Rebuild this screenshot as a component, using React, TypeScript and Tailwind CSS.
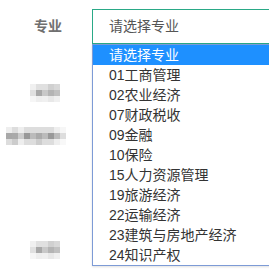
import React from "react";

const options = [
  "请选择专业",
  "01工商管理",
  "02农业经济",
  "07财政税收",
  "09金融",
  "10保险",
  "15人力资源管理",
  "19旅游经济",
  "22运输经济",
  "23建筑与房地产经济",
  "24知识产权",
];

// mosaic-blurred labels (censored in the original)
const shortMosaic = [
  ["#f0f0f0", "#e0e0e0", "#e0e0e0", "#d0d0d0", "#d8d8d8"],
  ["#e0e0e0", "#a8a8a8", "#c8c8c8", "#b4b4b4", "#c0c0c0"],
  ["#f6f6f6", "#eeeeee", "#f0f0f0", "#e8e8e8", "#f0f0f0"],
];

const longMosaic = [
  ["#eeeeee", "#dddddd", "#eeeeee", "#dddddd", "#dddddd", "#dddddd", "#dddddd", "#dddddd", "#eeeeee", "#f6f6f6"],
  ["#a8a8a8", "#aaaaaa", "#cccccc", "#999999", "#bbbbbb", "#aaaaaa", "#bbbbbb", "#999999", "#bbbbbb", "#dddddd"],
  ["#dddddd", "#cccccc", "#eeeeee", "#dddddd", "#dddddd", "#cccccc", "#dddddd", "#dddddd", "#eeeeee", "#f8f8f8"],
];

function Mosaic({ cells }: { cells: string[][] }) {
  return (
    <div className="flex flex-col blur-[0.6px]">
      {cells.map((row, i) => (
        <div key={i} className="flex">
          {row.map((c, j) => (
            <div key={j} className="w-[6px] h-[6px]" style={{ backgroundColor: c }} />
          ))}
        </div>
      ))}
    </div>
  );
}

export default function App() {
  return (
    <div className="relative w-[269px] h-[270px] overflow-hidden bg-white font-['Liberation_Sans','Noto_Sans_CJK_SC',sans-serif]">
      <div className="flex flex-col pt-[9px]">
        <div className="flex items-center h-[35px]">
          <div className="w-[62px] shrink-0 text-right text-[14px] text-[#707070] font-bold">专业</div>
          <div className="relative ml-[30px] w-[200px] shrink-0">
            <div className="h-[35px] border border-[#2aa987] flex items-center pl-[16px] text-[14px] text-[#555]">
              请选择专业
            </div>
            <ul className="absolute left-0 top-[35px] z-10 w-[200px] border border-[#7d9bd6] bg-white shadow-[0_1px_2px_rgba(0,0,0,0.12)]">
              {options.map((o, i) => (
                <li
                  key={o}
                  className={
                    i === 0
                      ? "h-[20px] leading-[20px] pl-[16px] text-[14px] bg-[#1e90ff] text-white"
                      : "h-[20px] leading-[20px] pl-[16px] text-[14px] text-[#333]"
                  }
                >
                  {o}
                </li>
              ))}
            </ul>
          </div>
        </div>
        <div className="flex flex-col">
          <div className="pl-[30px] mt-[40px]">
            <Mosaic cells={shortMosaic} />
          </div>
          <div className="pl-[6px] mt-[25px]">
            <Mosaic cells={longMosaic} />
          </div>
          <div className="pl-[30px] mt-[96px]">
            <Mosaic cells={shortMosaic} />
          </div>
        </div>
      </div>
    </div>
  );
}
